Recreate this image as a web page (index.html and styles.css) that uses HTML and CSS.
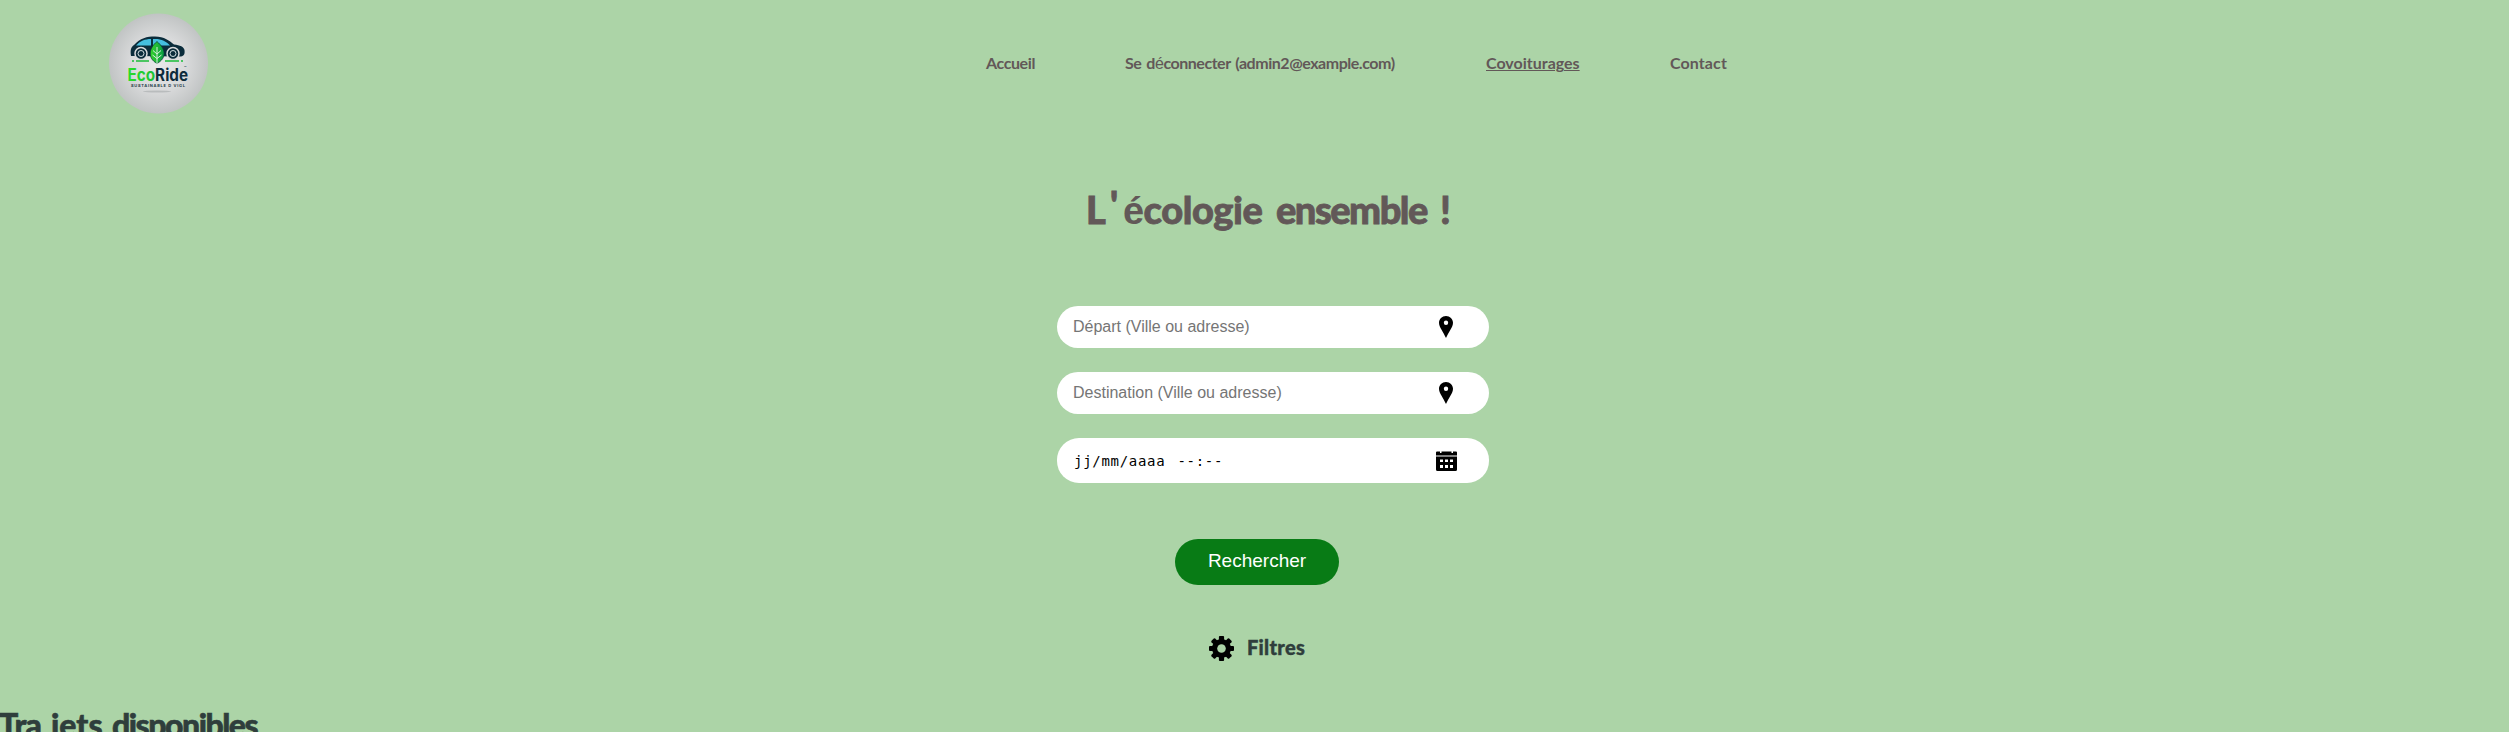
FILE: index.html
```html
<!DOCTYPE html>
<html lang="fr">
<head>
<meta charset="utf-8">
<title>EcoRide - Covoiturages</title>
<link rel="stylesheet" href="styles.css">
</head>
<body>
<header class="header">
  <a class="logo" aria-label="EcoRide">
    <svg width="100" height="101" viewBox="0 0 100 101">
      <defs>
        <radialGradient id="disc"><stop offset="0" stop-color="#e9e9ea"/><stop offset=".55" stop-color="#d9dadb"/><stop offset="1" stop-color="#c1c4c4"/></radialGradient>
        <linearGradient id="leaf"><stop offset="0" stop-color="#35d32c"/><stop offset="1" stop-color="#079a43"/></linearGradient>
        <linearGradient id="eco"><stop offset="0" stop-color="#2bdc2a"/><stop offset="1" stop-color="#0aa04a"/></linearGradient>
      </defs>
      <ellipse cx="49.5" cy="50.5" rx="49.5" ry="50" fill="url(#disc)"/>
      <path d="M22 43 C21 37 22 34 25 32 C31 25 38 23.500 46 23.500 C55 23.500 61 28 65 31.500 C71 32 75 34 75.500 37 C76 41 75 43 72 43.500 Z" fill="#0b2c3b"/>
      <path d="M27 32.500 C31 28 36 26 42 26 V32.500 Z M44 26 C52 25.500 57 28 61 32.500 H44 Z" fill="#45bfe0"/>
      <g fill="#0b2c3b" stroke="#d9dadc" stroke-width="1.500"><circle cx="32" cy="40.500" r="6"/><circle cx="64" cy="40.500" r="6"/></g>
      <g fill="none" stroke="#d5e2e4" stroke-width="1"><circle cx="32" cy="40.500" r="3"/><circle cx="64" cy="40.500" r="3"/></g>
      <path d="M23 48 H25 M27 48 H40 M56 48 H70 M72 48 H74" stroke="#1bbd38" stroke-width="1.500"/>
      <path d="M48 28.500 C57 36 58 45 48 50.500 C38 45 40 35 48 28.500 Z" fill="url(#leaf)" stroke="#073437" stroke-width=".7"/>
      <path d="M48 34 V51 M48 41 L44 37.500 M48 41 L52 37.500 M48 45.500 L43.500 42 M48 45.500 L52.500 42" stroke="#d9efdc" stroke-width="1" fill="none"/>
      <text class="brand" x="18.500" y="67.500" textLength="60.500" lengthAdjust="spacingAndGlyphs"><tspan fill="url(#eco)">Eco</tspan><tspan fill="#0d2b3c">Ride</tspan></text>
      <text class="tm" x="75" y="56">™</text>
      <text class="tagline" x="22" y="74" textLength="54">SUSTAINABLE D VIGL</text>
      <ellipse cx="48" cy="78.500" rx="14" ry=".9" fill="#b9bcbd"/>
    </svg>
  </a>
  <nav class="nav">
    <a class="link home">Accueil</a>
    <a class="link account">Se d<span class="accent">é</span>connecter (admin2@example.com)</a>
    <a class="link rides">Covoiturages</a>
    <a class="link contact">Contact</a>
  </nav>
</header>
<main>
  <h1 class="title"><span class="cap">L</span><span class="apostrophe">'</span><span class="accent">é</span><span class="cologie">cologie </span><span class="ensemble">ensemble </span>!</h1>
  <form class="search">
    <label class="field"><span>Départ (Ville ou adresse)</span>
      <svg width="14" height="22" viewBox="0 0 14 22"><path fill-rule="evenodd" d="M7 0C3.100 0 0 3 0 6.800C0 11 4.500 16.500 7 22C9.500 16.500 14 11 14 6.800C14 3 10.900 0 7 0ZM7 4.500A2.200 2.200 0 1 1 7 8.900A2.200 2.200 0 0 1 7 4.500Z"/></svg>
    </label>
    <label class="field"><span>Destination (Ville ou adresse)</span>
      <svg width="14" height="22" viewBox="0 0 14 22"><path fill-rule="evenodd" d="M7 0C3.100 0 0 3 0 6.800C0 11 4.500 16.500 7 22C9.500 16.500 14 11 14 6.800C14 3 10.900 0 7 0ZM7 4.500A2.200 2.200 0 1 1 7 8.900A2.200 2.200 0 0 1 7 4.500Z"/></svg>
    </label>
    <label class="field date"><span>jj/mm/aaaa --:--</span>
      <svg width="21" height="20" viewBox="0 0 21 20"><path d="M1 .5H4V2H5.500V.5H15.500V2H17V.5H20Q21 .5 21 1.500V4.500H0V1.500Q0 .5 1 .5Z"/><path fill-rule="evenodd" d="M0 5.500H21V18.500Q21 20 19.500 20H1.500Q0 20 0 18.500ZM4 8.500V11H7V8.500ZM9 8.500V11H12V8.500ZM14 8.500V11H17V8.500ZM4 14V17H7V14ZM9 14V17H12V14ZM14 14V17H17V14Z"/></svg>
    </label>
    <button class="submit" type="button">Rechercher</button>
  </form>
  <div class="filters">
    <svg width="25" height="25" viewBox="-12.500 -12.500 25 25"><g><rect x="-2.600" y="-12.500" width="5.200" height="25" rx="1"/><rect x="-2.600" y="-12.500" width="5.200" height="25" rx="1" transform="rotate(45)"/><rect x="-2.600" y="-12.500" width="5.200" height="25" rx="1" transform="rotate(90)"/><rect x="-2.600" y="-12.500" width="5.200" height="25" rx="1" transform="rotate(135)"/><circle r="9.500"/></g><circle class="hole" r="4.300"/></svg>
    <span class="filters-label">Filtres</span>
  </div>
  <h2 class="available"><span class="tra">Tra</span><span class="jets">jets</span><span class="dispo">disponibles</span></h2>
</main>
</body>
</html>
```
FILE: styles.css
```css
* { box-sizing: border-box; }
html { height: 100%; overflow: hidden; }
body { margin: 0; height: 100%; overflow: hidden; background: #acd4a7; font-family: Lato, sans-serif; }
.header { display: flex; height: 128px; padding-left: 109px; }
.logo { width: 877px; padding-top: 13px; }
.logo svg { display: block; }
.brand { font: 700 17px Inter, sans-serif; }
.tm { font: 4px Inter, sans-serif; fill: #0d2b3c; }
.tagline { font: 700 4px Inter, sans-serif; fill: #263d49; }
.nav { display: flex; gap: 90px; padding-top: 53px; }
.link { color: #625858; font-size: 16px; font-weight: 700; line-height: 20px; white-space: nowrap; }
.home { width: 49px; letter-spacing: -.4px; }
.account { width: 271px; letter-spacing: -.46px; word-spacing: 1.5px; }
.rides { width: 94px; text-decoration: underline; text-decoration-thickness: 1px; text-underline-offset: 1px; }
.contact { width: 58px; letter-spacing: .1px; }
.accent { font-family: "Liberation Sans", sans-serif; font-weight: 400; }
.title { display: flex; align-items: baseline; margin: 56px 0 0 1086px; height: 122px; font-size: 38px; font-weight: 900; line-height: 50px; color: #625858; white-space: nowrap; -webkit-text-stroke: .8px #625858; }
.title .accent { width: 20.5px; font-size: 38px; font-weight: 700; -webkit-text-stroke: 0; }
.cap { width: 24px; }
.apostrophe { position: relative; top: -5px; width: 13px; }
.cologie { width: 132.5px; letter-spacing: -.4px; }
.ensemble { width: 164px; letter-spacing: -1.5px; }
.search { display: flex; flex-direction: column; gap: 24px; width: 432px; margin-left: 1057px; }
.field { display: flex; align-items: center; height: 42px; padding: 0 36px 0 16px; border-radius: 22px; background: #fff; color: #757575; font: 16px "Liberation Sans", sans-serif; }
.field span { flex: 1; }
.date { height: 45px; padding: 0 32px 0 17px; font: 14px "DejaVu Sans Mono", monospace; letter-spacing: .7px; word-spacing: 3px; color: #000; }
.submit { width: 164px; height: 46px; margin: 32px 0 0 118px; padding: 0 0 2px; border: 0; border-radius: 23px; background: #087b15; color: #fff; font: 19px "Liberation Sans", sans-serif; }
.filters { display: flex; align-items: center; gap: 13px; height: 25px; margin: 51px 0 0 1209px; }
.filters-label { margin-top: -4px; font-size: 20px; font-weight: 900; letter-spacing: .3px; color: #2f3e3c; -webkit-text-stroke: .4px #2f3e3c; }
.hole { fill: #acd4a7; }
.available { display: flex; margin: 44px 0 0 -1px; font-size: 32px; font-weight: 900; line-height: 40px; color: #2f3e3c; white-space: nowrap; -webkit-text-stroke: .6px #2f3e3c; }
.tra { width: 52px; letter-spacing: -.8px; }
.jets { width: 61px; }
.dispo { letter-spacing: -1.5px; }
```
